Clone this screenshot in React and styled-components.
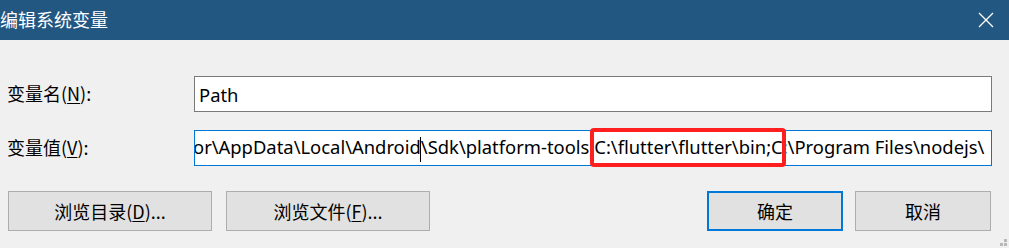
import React from "react";
import styled, { createGlobalStyle } from "styled-components";

const GlobalStyle = createGlobalStyle`
    html, body {
        margin: 0;
        padding: 0;
        background: #f0f0f0;
    }
    body {
        font-family: "Noto Sans", "Noto Sans CJK SC", sans-serif;
        color: #000;
    }
`;

const Dialog = styled.div`
    width: 1009px;
    height: 248px;
    background: #f0f0f0;
    position: relative;
    overflow: hidden;
`;

const TitleBar = styled.div`
    height: 40px;
    background: #225782;
    display: flex;
    align-items: center;
    justify-content: space-between;
    padding: 0 15px 0 0;
    color: #fff;
    font-family: "Noto Sans CJK SC", sans-serif;
    font-size: 18px;
`;

const Title = styled.div`
    margin-top: -2px;
`;

const Body = styled.div`
    padding: 36px 17px 0 7px;
    display: flex;
    flex-direction: column;
    gap: 18px;
`;

const Row = styled.div`
    display: flex;
    align-items: center;
`;

const Label = styled.label`
    width: 187px;
    font-family: "Noto Sans CJK SC", sans-serif;
    font-size: 18px;
    margin-top: -2px;
    u {
        text-decoration: underline;
        text-underline-offset: 2px;
    }
`;

const Field = styled.div`
    flex: 1;
    height: 36px;
    box-sizing: border-box;
    border: 1px solid ${(p) => (p.$focused ? "#0078d7" : "#7a7a7a")};
    background: #fff;
    display: flex;
    align-items: center;
    padding-left: 4px;
    overflow: hidden;
    white-space: nowrap;
    font-family: "Noto Sans", "Noto Sans CJK SC", sans-serif;
    font-size: 18.4px;
`;

const Scrolled = styled.span`
    margin-left: ${(p) => p.$shift}px;
`;

const Caret = styled.span`
    display: inline-block;
    width: 1px;
    height: 25px;
    background: #000;
    vertical-align: middle;
    margin: 0 -0.5px;
`;

const Highlight = styled.div`
    position: absolute;
    left: 590px;
    top: 128px;
    width: 196px;
    height: 39px;
    box-sizing: border-box;
    border: 4px solid #ff1f1f;
    border-radius: 4px;
`;

const ButtonRow = styled.div`
    display: flex;
    align-items: center;
    padding: 25px 18px 0 8px;
`;

const Button = styled.button`
    width: ${(p) => p.$w}px;
    height: 40px;
    box-sizing: border-box;
    background: #e1e1e1;
    border: ${(p) => (p.$default ? "2px solid #0078d7" : "1px solid #adadad")};
    font-family: "Noto Sans CJK SC", sans-serif;
    font-size: 18px;
    color: #000;
    padding: 0;
    margin-right: ${(p) => p.$gap || 0}px;
    u {
        text-decoration: underline;
        text-underline-offset: 2px;
    }
`;

const Spacer = styled.div`
    flex: 1;
`;

const Grip = styled.svg`
    position: absolute;
    right: 2px;
    bottom: 1px;
`;

function CloseIcon() {
    return (
        <svg width="16" height="16" viewBox="0 0 16 16">
            <path d="M1 1L15 15M15 1L1 15" stroke="#fff" strokeWidth="1.3" />
        </svg>
    );
}

export default function App() {
    return (
        <Dialog>
            <GlobalStyle />
            <TitleBar>
                <Title>编辑系统变量</Title>
                <CloseIcon />
            </TitleBar>
            <Body>
                <Row>
                    <Label>
                        变量名(<u>N</u>):
                    </Label>
                    <Field>Path</Field>
                </Row>
                <Row>
                    <Label>
                        变量值(<u>V</u>):
                    </Label>
                    <Field $focused>
                        <Scrolled $shift={-6}>
                            or\AppData\Local\Android
                            <Caret />
                            \Sdk\platform-tools;C:\flutter\flutter\bin;C:\Program
                            Files\nodejs\
                        </Scrolled>
                    </Field>
                </Row>
            </Body>
            <ButtonRow>
                <Button $w={204} $gap={14}>
                    浏览目录(<u>D</u>)...
                </Button>
                <Button $w={204}>
                    浏览文件(<u>F</u>)...
                </Button>
                <Spacer />
                <Button $w={136} $gap={12} $default>
                    确定
                </Button>
                <Button $w={136}>取消</Button>
            </ButtonRow>
            <Highlight />
            <Grip width="8" height="8" viewBox="0 0 8 8">
                <rect x="5" y="0" width="3" height="3" fill="#b8b8b8" />
                <rect x="1" y="4" width="3" height="3" fill="#b8b8b8" />
                <rect x="5" y="4" width="3" height="3" fill="#b8b8b8" />
            </Grip>
        </Dialog>
    );
}
